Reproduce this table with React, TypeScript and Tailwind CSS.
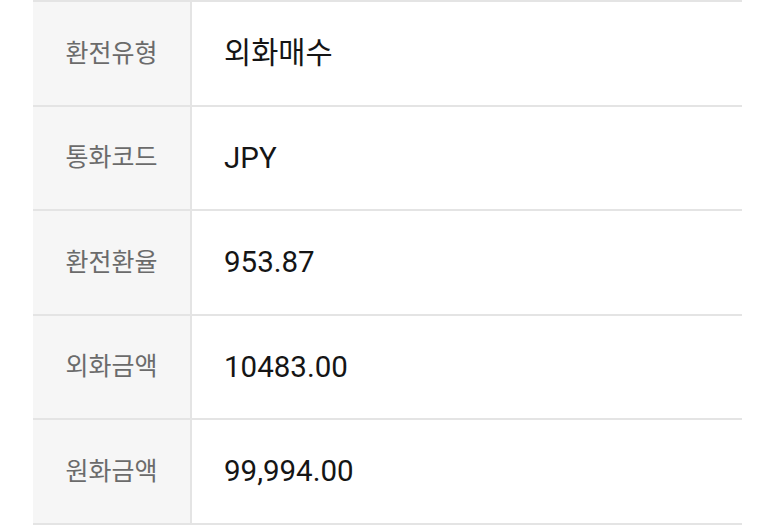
const rows = [
  { label: "환전유형", value: "외화매수" },
  { label: "통화코드", value: "JPY" },
  { label: "환전환율", value: "953.87" },
  { label: "외화금액", value: "10483.00" },
  { label: "원화금액", value: "99,994.00" },
];

export default function App() {
  return (
    <div
      className="w-[773px] h-[530px] bg-white overflow-hidden"
      style={{ fontFamily: 'Roboto, "Noto Sans CJK KR", sans-serif' }}
    >
      <div className="ml-[33px] w-[709px] border-t-2 border-[#e4e4e4]">
        {rows.map((row) => (
          <div
            key={row.label}
            className="flex h-[104.5px] border-b-2 border-[#e4e4e4]"
          >
            <div className="w-[159px] shrink-0 bg-[#f6f6f6] border-r-2 border-[#e4e4e4] flex items-center justify-center text-[25px] text-[#6b6b6b]">
              {row.label}
            </div>
            <div className="flex-1 flex items-center pl-[32px] text-[29.5px] text-[#151515]">
              {row.value}
            </div>
          </div>
        ))}
      </div>
    </div>
  );
}
